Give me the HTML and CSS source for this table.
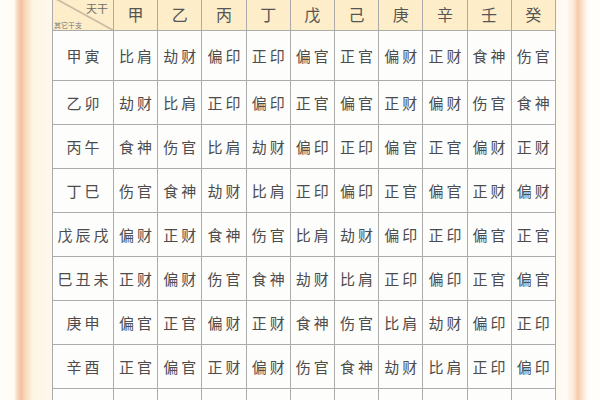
FILE: index.html
```html
<!DOCTYPE html>
<html lang="zh">
<head>
<meta charset="utf-8">
<link rel="stylesheet" href="styles.css">
</head>
<body>
<div class="page">
  <table class="grid">
    <colgroup><col class="c0"><col><col><col><col><col><col><col><col><col><col></colgroup>
    <thead>
      <tr>
        <th class="corner"><span class="tg">天干</span><span class="qt">其它干支</span></th>
        <th>甲</th><th>乙</th><th>丙</th><th>丁</th><th>戊</th><th>己</th><th>庚</th><th>辛</th><th>壬</th><th>癸</th>
      </tr>
    </thead>
    <tbody>
      <tr class="r1"><td>甲寅</td><td>比肩</td><td>劫财</td><td>偏印</td><td>正印</td><td>偏官</td><td>正官</td><td>偏财</td><td>正财</td><td>食神</td><td>伤官</td></tr>
      <tr><td>乙卯</td><td>劫财</td><td>比肩</td><td>正印</td><td>偏印</td><td>正官</td><td>偏官</td><td>正财</td><td>偏财</td><td>伤官</td><td>食神</td></tr>
      <tr><td>丙午</td><td>食神</td><td>伤官</td><td>比肩</td><td>劫财</td><td>偏印</td><td>正印</td><td>偏官</td><td>正官</td><td>偏财</td><td>正财</td></tr>
      <tr><td>丁巳</td><td>伤官</td><td>食神</td><td>劫财</td><td>比肩</td><td>正印</td><td>偏印</td><td>正官</td><td>偏官</td><td>正财</td><td>偏财</td></tr>
      <tr><td>戊辰戌</td><td>偏财</td><td>正财</td><td>食神</td><td>伤官</td><td>比肩</td><td>劫财</td><td>偏印</td><td>正印</td><td>偏官</td><td>正官</td></tr>
      <tr><td>巳丑未</td><td>正财</td><td>偏财</td><td>伤官</td><td>食神</td><td>劫财</td><td>比肩</td><td>正印</td><td>偏印</td><td>正官</td><td>偏官</td></tr>
      <tr><td>庚申</td><td>偏官</td><td>正官</td><td>偏财</td><td>正财</td><td>食神</td><td>伤官</td><td>比肩</td><td>劫财</td><td>偏印</td><td>正印</td></tr>
      <tr><td>辛酉</td><td>正官</td><td>偏官</td><td>正财</td><td>偏财</td><td>伤官</td><td>食神</td><td>劫财</td><td>比肩</td><td>正印</td><td>偏印</td></tr>
      <tr class="rlast"><td></td><td></td><td></td><td></td><td></td><td></td><td></td><td></td><td></td><td></td><td></td></tr>
    </tbody>
  </table>
</div>
</body>
</html>
```

FILE: styles.css
```css
html, body {
  margin: 0;
  padding: 0;
  width: 600px;
  height: 400px;
  overflow: hidden;
}
body {
  background:
    linear-gradient(to right,
      #fffdf8 0px, #fffcf4 14px,
      #f8dcc0 17px, #f3c0a4 21px, #f8d8b8 25px, #fbe8cc 29px,
      #fdf6e6 33px, #fdf8ec 52px,
      #fdf8ec 556px, #fffdf9 566px,
      #fbe6d2 574px, #f6c8aa 578px, #fbe2cc 582px,
      #fffdfa 588px, #fffefb 600px);
  font-family: "Noto Sans CJK SC", "Noto Sans", sans-serif;
  color: #4f4f4f;
}
.page {
  padding-left: 52px;
  margin-top: -4px;
}
.grid {
  border-collapse: collapse;
  table-layout: fixed;
  width: 504px;
}
.c0 { width: 61px; }
.grid th, .grid td {
  border: 1px solid #ababab;
  text-align: center;
  padding: 0;
}
.grid th {
  height: 33px;
  background: #fdedc8;
  font-weight: 400;
  font-size: 16px;
  color: #555;
}
.grid td {
  height: 43px;
  background: #fdfdfc;
  font-size: 15px;
  letter-spacing: 3px;
  text-indent: 3px;
  color: #4c4c4c;
}
.grid .r1 td { height: 49px; }
.corner {
  position: relative;
  background:
    linear-gradient(to top right, transparent calc(50% - 0.8px), #8d8176 50%, transparent calc(50% + 0.8px)),
    #fdedc8 !important;
}
.tg {
  position: absolute;
  right: 5px;
  top: 6px;
  font-size: 11px;
  color: #6c6c6c;
  line-height: 1;
}
.qt {
  position: absolute;
  left: 1px;
  bottom: 1px;
  font-size: 7px;
  color: #777;
  line-height: 1;
}
```
